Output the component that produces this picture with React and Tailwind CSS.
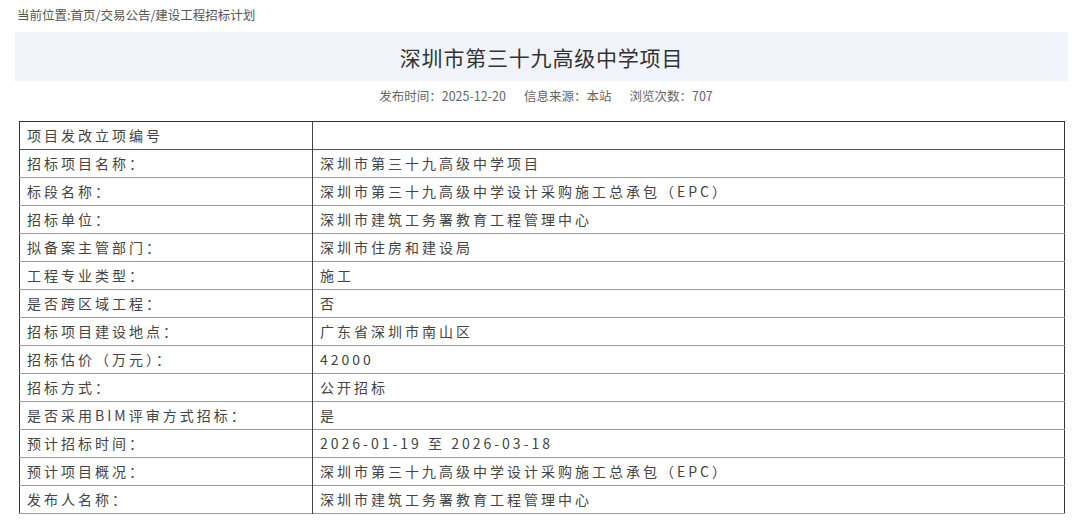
const rows = [
  ['项目发改立项编号', ''],
  ['招标项目名称：', '深圳市第三十九高级中学项目'],
  ['标段名称：', '深圳市第三十九高级中学设计采购施工总承包（EPC）'],
  ['招标单位：', '深圳市建筑工务署教育工程管理中心'],
  ['拟备案主管部门：', '深圳市住房和建设局'],
  ['工程专业类型：', '施工'],
  ['是否跨区域工程：', '否'],
  ['招标项目建设地点：', '广东省深圳市南山区'],
  ['招标估价（万元）：', '42000'],
  ['招标方式：', '公开招标'],
  ['是否采用BIM评审方式招标：', '是'],
  ['预计招标时间：', '2026-01-19 至 2026-03-18'],
  ['预计项目概况：', '深圳市第三十九高级中学设计采购施工总承包（EPC）'],
  ['发布人名称：', '深圳市建筑工务署教育工程管理中心'],
]

export default function App() {
  return (
    <div className="w-[1080px] h-[528px] bg-white overflow-hidden font-['Noto_Sans_CJK_SC','Noto_Sans',sans-serif]">
      <div className="pl-[17px] pt-[6px] h-[32px] text-[12.5px] leading-[18px] text-[#555]">当前位置:首页/交易公告/建设工程招标计划</div>

      <div className="mx-[15px] w-[1053px] h-[49px] bg-[#f0f4fa] flex items-center justify-center">
        <h1 className="text-[21px] leading-[28px] text-[#333] tracking-[0.8px]">深圳市第三十九高级中学项目</h1>
      </div>

      <div className="flex justify-center gap-[18px] h-[40px] pt-[6px] pl-[12px] text-[12.5px] leading-[18px] text-[#666]">
        <span>发布时间：2025-12-20</span>
        <span>信息来源：本站</span>
        <span>浏览次数：707</span>
      </div>

      <table className="ml-[19px] w-[1046px] border-collapse border-[1.5px] border-[#333] text-[14px] text-[#444] tracking-[3px]">
        <tbody>
          {rows.map(([label, value], i) => (
            <tr key={label} className={i === 0 ? 'border-b border-[#555]' : 'border-b border-[#999]'}>
              <td className="w-[293px] h-[28px] px-[7px] py-0 leading-[27px] border-r border-[#444]">{label}</td>
              <td className="h-[28px] px-[7px] py-0 leading-[27px]">{value}</td>
            </tr>
          ))}
        </tbody>
      </table>
    </div>
  )
}
